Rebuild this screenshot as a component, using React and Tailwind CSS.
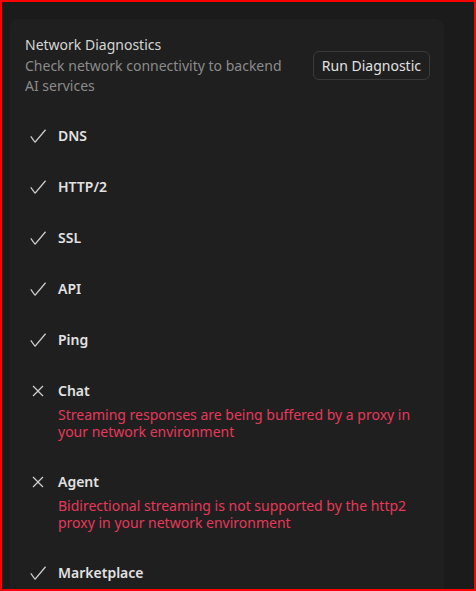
import React from 'react';

const checks = [
  { name: 'DNS', ok: true },
  { name: 'HTTP/2', ok: true },
  { name: 'SSL', ok: true },
  { name: 'API', ok: true },
  { name: 'Ping', ok: true },
  { name: 'Chat', ok: false, error: 'Streaming responses are being buffered by a proxy in your network environment' },
  { name: 'Agent', ok: false, error: 'Bidirectional streaming is not supported by the http2 proxy in your network environment' },
  { name: 'Marketplace', ok: true },
];

const CheckIcon = () => (
  <svg width="20" height="20" viewBox="0 0 16 16" fill="currentColor">
    <path d="M14.431 3.323l-8.47 10-.79-.036-3.35-4.77.818-.574 2.978 4.24 8.051-9.506.764.646z" />
  </svg>
);

const CloseIcon = () => (
  <svg width="20" height="20" viewBox="0 0 16 16" fill="currentColor">
    <path d="M8 8.707l3.646 3.647.708-.707L8.707 8l3.647-3.646-.707-.708L8 7.293 4.354 3.646l-.707.708L7.293 8l-3.646 3.646.707.708L8 8.707z" />
  </svg>
);

export default function App() {
  return (
    <div className="w-[476px] h-[591px] overflow-hidden border-2 border-[#ff0000] bg-[#1b1b1b] font-['Noto_Sans',sans-serif] text-[14px]">
      <div className="ml-[8px] mt-[17px] w-[434px] min-h-[600px] rounded-lg bg-[#1f1f1f] pl-[15px] pr-[14px] pt-[16px]">
        {/* Header */}
        <div className="flex items-center justify-between">
          <div className="w-[270px]">
            <h2 className="text-[#d6d6d6] leading-[20px]">Network Diagnostics</h2>
            <p className="text-[#8b8b8b] leading-[20px] mt-px">Check network connectivity to backend AI services</p>
          </div>
          <button className="h-[29px] px-[8px] rounded-md border border-[#3a3a3a] text-[#e2e2e2] leading-none">
            Run Diagnostic
          </button>
        </div>

        {/* Checks */}
        <div className="mt-[30px] flex flex-col gap-[31px]">
          {checks.map(c => (
            <div key={c.name} className="flex items-start gap-[10px] pl-[3px]">
              <span className="w-[20px] h-[20px] shrink-0 text-[#cfcfcf]">
                {c.ok ? <CheckIcon /> : <CloseIcon />}
              </span>
              <div>
                <div className="font-semibold text-[#e2e2e2] leading-[20px]">{c.name}</div>
                {c.error && (
                  <p className="mt-[5px] mb-[1px] text-[#e5395b] leading-[17px]">{c.error}</p>
                )}
              </div>
            </div>
          ))}
        </div>
      </div>
    </div>
  );
}
